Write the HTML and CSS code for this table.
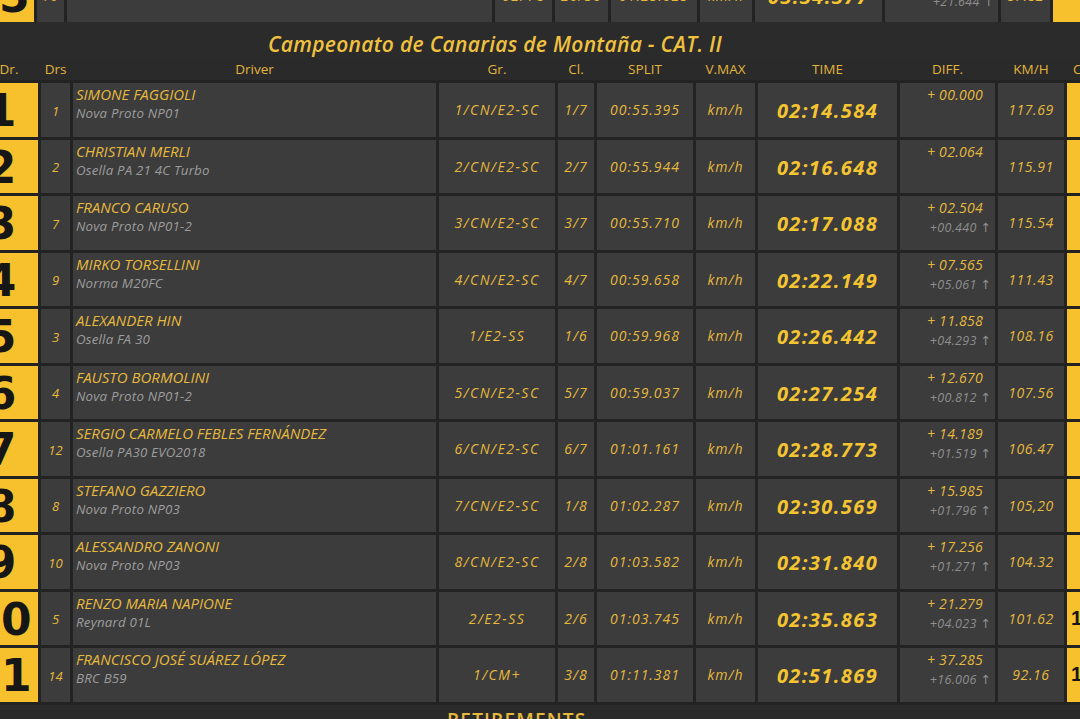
FILE: index.html
```html
<!DOCTYPE html>
<html lang="es">
<head>
<meta charset="utf-8">
<title>Campeonato de Canarias de Montaña - CAT. II</title>
<link rel="stylesheet" href="styles.css">
</head>
<body>
<div class="board">
  <div class="grid prev">
    <div class="c pos">15</div>
    <div class="c drs">76</div>
    <div class="c driver"><span class="name">&nbsp;</span><span class="car">BMW 325i (E30)</span></div>
    <div class="c gr">02/TC</div>
    <div class="c cl">20/30</div>
    <div class="c split">01:25.025</div>
    <div class="c vmax">km/h</div>
    <div class="c time">03:34.377</div>
    <div class="c diff"><span class="d1">&nbsp;</span><span class="d2">+21.644 ↑</span></div>
    <div class="c kmh">87.82</div>
    <div class="c pos2"></div>
  </div>

  <h2 class="title">Campeonato de Canarias de Montaña - CAT. II</h2>

  <div class="grid head">
    <div class="h hf">Dr.</div>
    <div class="h">Drs</div>
    <div class="h">Driver</div>
    <div class="h">Gr.</div>
    <div class="h">Cl.</div>
    <div class="h">SPLIT</div>
    <div class="h">V.MAX</div>
    <div class="h">TIME</div>
    <div class="h">DIFF.</div>
    <div class="h">KM/H</div>
    <div class="h hl">Cl.</div>
  </div>

  <div class="grid rows">
    <div class="c pos">1</div><div class="c drs">1</div>
    <div class="c driver"><span class="name">SIMONE FAGGIOLI</span><span class="car">Nova Proto NP01</span></div>
    <div class="c gr">1/CN/E2-SC</div><div class="c cl">1/7</div><div class="c split">00:55.395</div><div class="c vmax">km/h</div>
    <div class="c time">02:14.584</div>
    <div class="c diff"><span class="d1">+ 00.000</span><span class="d2">&nbsp;</span></div>
    <div class="c kmh">117.69</div><div class="c pos2"></div>

    <div class="c pos">2</div><div class="c drs">2</div>
    <div class="c driver"><span class="name">CHRISTIAN MERLI</span><span class="car">Osella PA 21 4C Turbo</span></div>
    <div class="c gr">2/CN/E2-SC</div><div class="c cl">2/7</div><div class="c split">00:55.944</div><div class="c vmax">km/h</div>
    <div class="c time">02:16.648</div>
    <div class="c diff"><span class="d1">+ 02.064</span><span class="d2">&nbsp;</span></div>
    <div class="c kmh">115.91</div><div class="c pos2"></div>

    <div class="c pos">3</div><div class="c drs">7</div>
    <div class="c driver"><span class="name">FRANCO CARUSO</span><span class="car">Nova Proto NP01-2</span></div>
    <div class="c gr">3/CN/E2-SC</div><div class="c cl">3/7</div><div class="c split">00:55.710</div><div class="c vmax">km/h</div>
    <div class="c time">02:17.088</div>
    <div class="c diff"><span class="d1">+ 02.504</span><span class="d2">+00.440 ↑</span></div>
    <div class="c kmh">115.54</div><div class="c pos2"></div>

    <div class="c pos">4</div><div class="c drs">9</div>
    <div class="c driver"><span class="name">MIRKO TORSELLINI</span><span class="car">Norma M20FC</span></div>
    <div class="c gr">4/CN/E2-SC</div><div class="c cl">4/7</div><div class="c split">00:59.658</div><div class="c vmax">km/h</div>
    <div class="c time">02:22.149</div>
    <div class="c diff"><span class="d1">+ 07.565</span><span class="d2">+05.061 ↑</span></div>
    <div class="c kmh">111.43</div><div class="c pos2"></div>

    <div class="c pos">5</div><div class="c drs">3</div>
    <div class="c driver"><span class="name">ALEXANDER HIN</span><span class="car">Osella FA 30</span></div>
    <div class="c gr">1/E2-SS</div><div class="c cl">1/6</div><div class="c split">00:59.968</div><div class="c vmax">km/h</div>
    <div class="c time">02:26.442</div>
    <div class="c diff"><span class="d1">+ 11.858</span><span class="d2">+04.293 ↑</span></div>
    <div class="c kmh">108.16</div><div class="c pos2"></div>

    <div class="c pos">6</div><div class="c drs">4</div>
    <div class="c driver"><span class="name">FAUSTO BORMOLINI</span><span class="car">Nova Proto NP01-2</span></div>
    <div class="c gr">5/CN/E2-SC</div><div class="c cl">5/7</div><div class="c split">00:59.037</div><div class="c vmax">km/h</div>
    <div class="c time">02:27.254</div>
    <div class="c diff"><span class="d1">+ 12.670</span><span class="d2">+00.812 ↑</span></div>
    <div class="c kmh">107.56</div><div class="c pos2"></div>

    <div class="c pos">7</div><div class="c drs">12</div>
    <div class="c driver"><span class="name">SERGIO CARMELO FEBLES FERNÁNDEZ</span><span class="car">Osella PA30 EVO2018</span></div>
    <div class="c gr">6/CN/E2-SC</div><div class="c cl">6/7</div><div class="c split">01:01.161</div><div class="c vmax">km/h</div>
    <div class="c time">02:28.773</div>
    <div class="c diff"><span class="d1">+ 14.189</span><span class="d2">+01.519 ↑</span></div>
    <div class="c kmh">106.47</div><div class="c pos2"></div>

    <div class="c pos">8</div><div class="c drs">8</div>
    <div class="c driver"><span class="name">STEFANO GAZZIERO</span><span class="car">Nova Proto NP03</span></div>
    <div class="c gr">7/CN/E2-SC</div><div class="c cl">1/8</div><div class="c split">01:02.287</div><div class="c vmax">km/h</div>
    <div class="c time">02:30.569</div>
    <div class="c diff"><span class="d1">+ 15.985</span><span class="d2">+01.796 ↑</span></div>
    <div class="c kmh">105,20</div><div class="c pos2"></div>

    <div class="c pos">9</div><div class="c drs">10</div>
    <div class="c driver"><span class="name">ALESSANDRO ZANONI</span><span class="car">Nova Proto NP03</span></div>
    <div class="c gr">8/CN/E2-SC</div><div class="c cl">2/8</div><div class="c split">01:03.582</div><div class="c vmax">km/h</div>
    <div class="c time">02:31.840</div>
    <div class="c diff"><span class="d1">+ 17.256</span><span class="d2">+01.271 ↑</span></div>
    <div class="c kmh">104.32</div><div class="c pos2"></div>

    <div class="c pos">10</div><div class="c drs">5</div>
    <div class="c driver"><span class="name">RENZO MARIA NAPIONE</span><span class="car">Reynard 01L</span></div>
    <div class="c gr">2/E2-SS</div><div class="c cl">2/6</div><div class="c split">01:03.745</div><div class="c vmax">km/h</div>
    <div class="c time">02:35.863</div>
    <div class="c diff"><span class="d1">+ 21.279</span><span class="d2">+04.023 ↑</span></div>
    <div class="c kmh">101.62</div><div class="c pos2">10</div>

    <div class="c pos">11</div><div class="c drs">14</div>
    <div class="c driver"><span class="name">FRANCISCO JOSÉ SUÁREZ LÓPEZ</span><span class="car">BRC B59</span></div>
    <div class="c gr">1/CM+</div><div class="c cl">3/8</div><div class="c split">01:11.381</div><div class="c vmax">km/h</div>
    <div class="c time">02:51.869</div>
    <div class="c diff"><span class="d1">+ 37.285</span><span class="d2">+16.006 ↑</span></div>
    <div class="c kmh">92.16</div><div class="c pos2">11</div>
  </div>

  <h3 class="section">RETIREMENTS</h3>
</div>
</body>
</html>
```

FILE: styles.css
```css
html, body {
  margin: 0;
  padding: 0;
}
body {
  width: 1080px;
  height: 719px;
  overflow: hidden;
  background: #2a2a2a;
  font-family: "Open Sans", "DejaVu Sans", sans-serif;
  color: #e6b93c;
}
.board {
  width: 1160px;
  margin-left: -36px;
}
.grid {
  display: grid;
  column-gap: 3px;
}
.prev {
  grid-template-columns: 70px 27px 425px 57px 53px 86px 52px 127px 113px 49px 60px;
  grid-template-rows: 54px;
  margin-top: -32px;
  background: #232323;
}
.head, .rows {
  grid-template-columns: 74px 29px 363px 116px 36px 96px 59px 139px 95px 66px 60px;
}
.rows {
  grid-auto-rows: 53.5px;
  row-gap: 3px;
  background: #232323;
  padding: 3px 0;
}
.c {
  background: #3c3c3c;
  display: flex;
  align-items: center;
  justify-content: center;
  font-style: italic;
  font-size: 14px;
  letter-spacing: 1px;
  color: #e6b93c;
  white-space: nowrap;
  overflow: hidden;
}
.pos, .pos2 {
  background: #f7c12e;
  color: #161616;
  font-style: normal;
  font-weight: 700;
  font-family: "DejaVu Sans", "Liberation Sans", sans-serif;
  font-size: 44px;
  letter-spacing: 0;
  padding-top: 2px;
}
.pos2 {
  justify-content: flex-start;
  font-family: "Liberation Sans", Arial, sans-serif;
  font-size: 20px;
  padding-left: 4px;
  padding-top: 0;
}
.drs {
  font-size: 13px;
  letter-spacing: 0;
  padding-top: 2px;
}
.gr {
  letter-spacing: 1.5px;
}
.driver {
  flex-direction: column;
  align-items: flex-start;
  justify-content: flex-start;
  padding: 2px 0 0 3px;
  letter-spacing: 0;
}
.name {
  font-size: 15px;
  line-height: 19px;
  color: #e6b93c;
}
.car {
  font-size: 13.3px;
  line-height: 19px;
  color: #9c9c9c;
  letter-spacing: 0.2px;
}
.time {
  font-weight: 700;
  font-size: 20px;
  letter-spacing: 1.4px;
  color: #f5c431;
  padding-top: 2px;
}
.diff {
  flex-direction: column;
  align-items: flex-end;
  justify-content: flex-start;
  padding: 2px 4px 0 0;
  letter-spacing: 0.3px;
}
.d1 {
  font-size: 14px;
  line-height: 20px;
  color: #e6b93c;
  padding-right: 8px;
}
.d2 {
  font-size: 12.5px;
  line-height: 19px;
  color: #8e8e8e;
}
.kmh {
  letter-spacing: 0.6px;
}
.prev .name { line-height: 12px; }
.prev .car { line-height: 19px; }
.prev .diff { padding-top: 4px; }

.title {
  margin: 0;
  height: 36px;
  padding: 8px 98px 0 0;
  display: flex;
  align-items: center;
  justify-content: center;
  box-sizing: border-box;
  font-style: italic;
  font-weight: 600;
  font-size: 21px;
  letter-spacing: 0.3px;
  color: #f0c13f;
  background: #2b2b2b;
}
.head {
  height: 22px;
  align-items: center;
  background: #2a2a2a;
}
.h {
  text-align: center;
  font-size: 13.5px;
  color: #e2b43c;
  white-space: nowrap;
  overflow: hidden;
}
.hf {
  padding-left: 16px;
}
.hl {
  text-align: left;
  padding-left: 6px;
}
.section {
  margin: 5px 0 0 0;
  padding-left: 483px;
  font-size: 19px;
  line-height: 20px;
  font-weight: 600;
  letter-spacing: 1.2px;
  color: #e6b93c;
  height: 30px;
}
```
